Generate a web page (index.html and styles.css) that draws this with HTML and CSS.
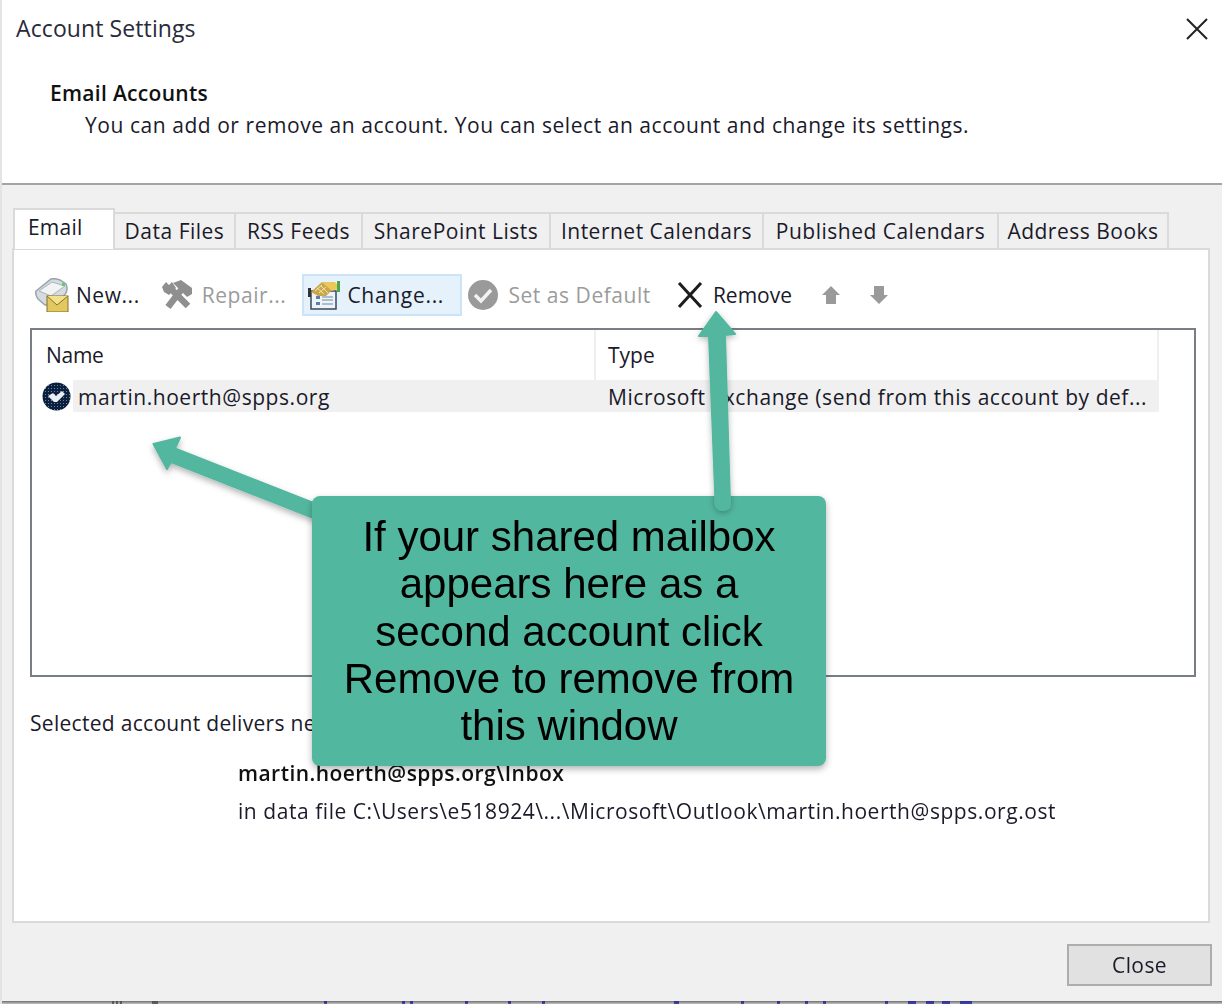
FILE: index.html
```html
<!DOCTYPE html>
<html lang="en">
<head>
<meta charset="utf-8">
<title>Account Settings</title>
<link rel="stylesheet" href="styles.css">
</head>
<body>
<div class="window">
  <header class="head">
    <div class="title-row">
      <span class="title">Account Settings</span>
      <svg class="close-x" viewBox="0 0 22 22" width="22" height="22"><path d="M1 1L21 21M21 1L1 21" stroke="#222" stroke-width="2" fill="none"/></svg>
    </div>
    <h1 class="head-h">Email Accounts</h1>
    <p class="head-p">You can add or remove an account. You can select an account and change its settings.</p>
  </header>
  <main class="body">
    <div class="tabs">
      <div class="tab tab-on">Email</div>
      <div class="tab">Data Files</div>
      <div class="tab">RSS Feeds</div>
      <div class="tab">SharePoint Lists</div>
      <div class="tab">Internet Calendars</div>
      <div class="tab">Published Calendars</div>
      <div class="tab">Address Books</div>
    </div>
    <section class="panel">
      <div class="toolbar">
        <div class="tool tool-new">
          <svg class="ico" viewBox="0 0 34 34" width="34" height="34">
            <path d="M1 13L16 1Q20 0 25 2L31 6Q33 10 31 15L22 27H10L3 21Q0 17 1 13Z" fill="#d5dbe0" stroke="#98a4ac" stroke-width="1.5"/>
            <path d="M4 13L17 4L30 8L16 18Z" fill="#f1f3f5" stroke="#aab4bb"/>
            <rect x="27" y="5" width="3" height="3" fill="#5fd04f"/>
            <rect x="12" y="18" width="21" height="16" fill="#e3c85f" stroke="#84702a"/>
            <path d="M12 18L22 27L33 18" fill="#f3e08c" stroke="#84702a"/>
          </svg>
          <span>New...</span>
        </div>
        <div class="tool tool-repair off">
          <svg class="ico" viewBox="0 0 32 30" width="32" height="30">
            <path d="M7 27L20 10M27 26L9 8" stroke="#8f8f8f" stroke-width="6.500" fill="none"/>
            <path d="M12 3L20 0L31 8V14L26 17L18 9Z" fill="#8f8f8f"/>
            <path d="M1 7L5 2L8 5L11 2L15 8L8 15L3 12Z" fill="#8f8f8f"/>
          </svg>
          <span>Repair...</span>
        </div>
        <div class="tool tool-change">
          <svg class="ico" viewBox="0 0 33 30" width="33" height="30">
            <rect x="3" y="11" width="25" height="18" fill="#eef3f8" stroke="#34495e" stroke-width="1.5"/>
            <rect x="0" y="8" width="3" height="9" fill="#333"/>
            <path d="M8 16h4v3h-4zM8 22h4v3h-4z" fill="#5c7fa3"/>
            <path d="M14 17h11M14 20h11M14 24h11" stroke="#6b87a3" stroke-width="1.2"/>
            <path d="M3 12L14 2L24 10L18 16L10 16Z" fill="#c9a64c"/>
            <path d="M14 2H27L32 8L24 11Z" fill="#ecc75a"/>
            <rect x="29" y="1" width="3" height="11" fill="#4aa64a"/>
            <path d="M7 11L14 5M11 13L18 7M20 13L13 6M16 14L9 8" stroke="#f4e4a9" stroke-width="1"/>
          </svg>
          <span>Change...</span>
        </div>
        <div class="tool tool-default off">
          <svg class="ico" viewBox="0 0 30 30" width="30" height="30">
            <circle cx="15" cy="15" r="15" fill="#9a9a9a"/>
            <path d="M7 15L13 21L23 10" fill="none" stroke="#f2f2f2" stroke-width="3.5"/>
          </svg>
          <span>Set as Default</span>
        </div>
        <div class="tool tool-remove">
          <svg class="ico" viewBox="0 0 26 26" width="26" height="26"><path d="M2 1L24 25" stroke="#1c1c1c" stroke-width="3"/><path d="M24 1L2 25" stroke="#1c1c1c" stroke-width="3"/></svg>
          <span>Remove</span>
        </div>
        <div class="tool-arrows">
          <svg viewBox="0 0 18 18" width="18" height="18"><path d="M9 0L18 9H14V18H4V9H0Z" fill="#9a9a9a"/></svg>
          <svg viewBox="0 0 18 18" width="18" height="18"><path d="M4 0H14V9H18L9 18L0 9H4Z" fill="#9a9a9a"/></svg>
        </div>
      </div>
      <div class="list">
        <div class="list-head">
          <div class="col-name">Name</div>
          <div class="col-type">Type</div>
        </div>
        <div class="list-row">
          <svg class="acct" viewBox="0 0 29 29" width="29" height="29">
            <defs><pattern id="dots" width="3" height="3" patternUnits="userSpaceOnUse"><rect width="3" height="3" fill="#0b1f3f"/><rect width="1" height="1" fill="#6f7f9c"/></pattern></defs>
            <circle cx="14.500" cy="14.500" r="14" fill="url(#dots)"/>
            <path d="M6 14L11 11L14 14L20 9L23 12L15 20H12Z" fill="#e9eef4"/>
          </svg>
          <div class="cell-name">martin.hoerth@spps.org</div>
          <div class="cell-type">Microsoft Exchange (send from this account by def...</div>
        </div>
      </div>
      <p class="deliver">Selected account delivers new messages to the following location:</p>
      <div class="location">
        <div class="loc-b">martin.hoerth@spps.org\Inbox</div>
        <div class="loc-p">in data file C:\Users\e518924\...\Microsoft\Outlook\martin.hoerth@spps.org.ost</div>
      </div>
    </section>
    <div class="actions"><button class="close-btn">Close</button></div>
  </main>
  <div class="strip">
    <svg viewBox="0 0 1222 3" width="1222" height="3">
      <path d="M110 0h2v3h-2zM114 0h2v3h-2zM118 0h2v3h-2zM150 0h6v3h-6z" fill="#444"/>
      <path d="M322 0h3v3h-3zM400 0h3v3h-3zM408 0h3v3h-3zM463 0h3v3h-3zM506 0h3v3h-3zM540 0h3v3h-3zM672 0h5v3h-5zM739 0h3v3h-3zM775 0h3v3h-3zM803 0h3v3h-3zM821 0h3v3h-3zM883 0h3v3h-3zM906 0h8v3h-8zM924 0h8v3h-8zM940 0h8v3h-8zM958 0h12v3h-12z" fill="#1a1a9a"/>
    </svg>
  </div>
</div>
<svg class="arrow-layer" viewBox="0 0 1222 1004" width="1222" height="1004">
  <defs><filter id="sh" x="-30%" y="-30%" width="160%" height="160%"><feDropShadow dx="0" dy="3" stdDeviation="3" flood-color="#000" flood-opacity=".3"/></filter></defs>
  <path class="arrow" filter="url(#sh)" d="M153.500 444L180 437.500L175 448.500L316 504V519L171 462L167 469Z"/>
</svg>
<div class="callout">If your shared mailbox appears here as a second account click Remove to remove from this window</div>
<svg class="arrow-layer" viewBox="0 0 1222 1004" width="1222" height="1004">
  <defs><filter id="sh2" x="-50%" y="-10%" width="200%" height="120%"><feDropShadow dx="0" dy="2" stdDeviation="3" flood-color="#000" flood-opacity=".28"/></filter></defs>
  <path class="arrow" filter="url(#sh2)" d="M716 312L735 334L725 335L730 503Q730 510 723 510Q716 510 715.500 503L709 336L699 336Z"/>
</svg>
</body>
</html>
```
FILE: styles.css
```css
* { box-sizing: border-box; }
html, body { margin: 0; padding: 0; }
body {
  width: 1222px;
  height: 1004px;
  overflow: hidden;
  background: #fff;
  position: relative;
  font-family: "Open Sans", "Noto Sans", sans-serif;
  font-size: 21px;
  color: #1a1a2a;
}
.window { width: 1222px; height: 1004px; display: flex; flex-direction: column; border-left: 2px solid #e4e4e4; filter: blur(.35px); }
.head { height: 185px; flex: none; background: #fff; border-bottom: 2px solid #a4a4a4; padding: 0 0 0 14px; }
.title-row { display: flex; justify-content: space-between; align-items: center; height: 56px; padding-right: 14px; }
.title { font-size: 23px; line-height: 54px; letter-spacing: .1px; color: #2a2a3a; }
.close-x { display: block; margin-top: 2px; }
.head-h { margin: 20px 0 0 34px; font-size: 21px; line-height: 34px; font-weight: 600; letter-spacing: .3px; color: #111; }
.head-p { margin: -2px 0 0 69px; line-height: 34px; font-size: 21px; letter-spacing: .55px; }
.body { flex: 1; min-height: 0; background: #f0f0f0; padding: 23px 12px 0 10px; display: flex; flex-direction: column; }
.tabs { display: grid; grid-template-columns: 102px 121px 127px 188px 213px 235px 170px; align-items: end; height: 40px; margin-left: 1px; position: relative; z-index: 1; }
.tab { height: 36px; text-align: center; line-height: 34px; border: 2px solid #dadada; border-left-width: 0; border-bottom: 0; background: #f0f0f0; letter-spacing: .5px; white-space: nowrap; }
.tab-on { height: 41px; margin-bottom: -1px; background: #fff; border: 2px solid #dadada; border-bottom: 0; line-height: 34px; text-align: left; padding-left: 13px; letter-spacing: .2px; }
.panel { height: 675px; flex: none; background: #fff; border: 2px solid #dadada; padding: 22px 12px 0 16px; }
.toolbar { height: 46px; display: flex; align-items: center; }
.tool { display: flex; align-items: center; height: 42px; letter-spacing: .55px; white-space: nowrap; }
.tool .ico { flex: none; display: block; }
.tool-new { margin-left: 5px; gap: 7px; }
.tool-repair { margin-left: 21px; gap: 9px; }
.tool-change { margin-left: 16px; width: 160px; background: #e5f1fb; border: 2px solid #cce4f7; padding-left: 4px; gap: 6px; letter-spacing: .7px; }
.tool-default { margin-left: 6px; gap: 10px; }
.tool-remove { margin-left: 26px; gap: 10px; letter-spacing: 0; }
.off { color: #9b9b9b; }
.tool-arrows { display: flex; gap: 30px; margin-left: 30px; }
.tool-arrows svg { display: block; }
.list { height: 349px; margin-top: 10px; border: 2px solid #787d86; background: #fff; }
.list-head { display: grid; grid-template-columns: 564px 563px; height: 50px; }
.col-name { padding: 9px 0 0 14px; line-height: 32px; border-right: 2px solid #efefef; letter-spacing: -.3px; height: 50px; }
.col-type { padding: 9px 0 0 12px; line-height: 32px; border-right: 2px solid #efefef; height: 50px; }
.list-row { display: flex; align-items: center; position: relative; height: 32px; width: 1086px; margin-left: 41px; padding-top: 2px; background: #f0f0f0; }
.acct { position: absolute; left: -31px; top: 2px; }
.cell-name { width: 535px; padding-left: 5px; letter-spacing: .55px; white-space: nowrap; }
.cell-type { letter-spacing: .55px; white-space: nowrap; }
.deliver { margin: 30px 0 0 0; width: 282px; overflow: hidden; line-height: 32px; letter-spacing: .3px; white-space: nowrap; }
.location { margin: 17px 0 0 208px; }
.loc-b { font-weight: 600; line-height: 34px; letter-spacing: .45px; color: #111; }
.loc-p { line-height: 34px; margin-top: 4px; letter-spacing: .55px; white-space: nowrap; }
.actions { display: flex; justify-content: flex-end; padding-top: 21px; }
.close-btn { width: 145px; height: 42px; margin-right: -2px; background: #e1e1e1; border: 2px solid #adadad; font: inherit; color: #1a1a2a; letter-spacing: .4px; }
.strip { height: 3px; flex: none; background: linear-gradient(#6f6f6f, #c4c4c4); }
.strip svg { display: block; opacity: .75; }
.arrow-layer { position: absolute; left: 0; top: 0; pointer-events: none; }
.arrow { fill: #52b79f; stroke: #52b79f; stroke-width: 2; stroke-linejoin: round; }
.callout { position: absolute; left: 312px; top: 496px; width: 514px; height: 270px; padding: 17px 20px 0; background: #52b79f; border-radius: 8px; box-shadow: 0 3px 7px rgba(0,0,0,.3); font-family: "Liberation Sans", Arial, sans-serif; font-size: 42px; line-height: 47.3px; text-align: center; color: #000; }
```
